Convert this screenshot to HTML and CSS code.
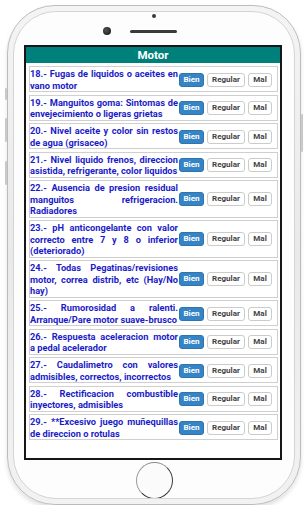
FILE: index.html
```html
<!DOCTYPE html>
<html lang="es">
<head>
  <meta charset="UTF-8">
  <meta name="viewport" content="width=device-width, initial-scale=1">
  <title>Motor</title>
  <link rel="stylesheet" href="styles.css">
</head>
<body>
<div class="phone">
  <span class="side side-l1"></span>
  <span class="side side-l2"></span>
  <span class="side side-l3"></span>
  <span class="side side-r"></span>

  <div class="face">
    <div class="top">
      <span class="sensor"></span>
      <div class="cam-row">
        <span class="camera"></span>
        <span class="speaker"></span>
      </div>
    </div>

    <div class="screen">
      <div class="title">Motor</div>
      <div class="list">
        <div class="row">
          <p class="q">18.- Fugas de liquidos o aceites en vano motor</p>
          <div class="btns"><button class="btn on">Bien</button><button class="btn">Regular</button><button class="btn">Mal</button></div>
        </div>
        <div class="row">
          <p class="q">19.- Manguitos goma: Sintomas de envejecimiento o ligeras grietas</p>
          <div class="btns"><button class="btn on">Bien</button><button class="btn">Regular</button><button class="btn">Mal</button></div>
        </div>
        <div class="row">
          <p class="q">20.- Nivel aceite y color sin restos de agua (grisaceo)</p>
          <div class="btns"><button class="btn on">Bien</button><button class="btn">Regular</button><button class="btn">Mal</button></div>
        </div>
        <div class="row">
          <p class="q">21.- Nivel liquido frenos, direccion asistida, refrigerante, color liquidos</p>
          <div class="btns"><button class="btn on">Bien</button><button class="btn">Regular</button><button class="btn">Mal</button></div>
        </div>
        <div class="row">
          <p class="q">22.- Ausencia de presion residual manguitos refrigeracion. Radiadores</p>
          <div class="btns"><button class="btn on">Bien</button><button class="btn">Regular</button><button class="btn">Mal</button></div>
        </div>
        <div class="row">
          <p class="q">23.- pH anticongelante con valor correcto entre 7 y 8 o inferior (deteriorado)</p>
          <div class="btns"><button class="btn on">Bien</button><button class="btn">Regular</button><button class="btn">Mal</button></div>
        </div>
        <div class="row">
          <p class="q">24.- Todas Pegatinas/revisiones motor, correa distrib, etc (Hay/No hay)</p>
          <div class="btns"><button class="btn on">Bien</button><button class="btn">Regular</button><button class="btn">Mal</button></div>
        </div>
        <div class="row">
          <p class="q">25.- Rumorosidad a ralenti. Arranque/Pare motor suave-brusco</p>
          <div class="btns"><button class="btn on">Bien</button><button class="btn">Regular</button><button class="btn">Mal</button></div>
        </div>
        <div class="row">
          <p class="q">26.- Respuesta aceleracion motor a&nbsp;pedal acelerador</p>
          <div class="btns"><button class="btn on">Bien</button><button class="btn">Regular</button><button class="btn">Mal</button></div>
        </div>
        <div class="row">
          <p class="q">27.- Caudalimetro con valores admisibles, correctos, incorrectos</p>
          <div class="btns"><button class="btn on">Bien</button><button class="btn">Regular</button><button class="btn">Mal</button></div>
        </div>
        <div class="row">
          <p class="q">28.- Rectificacion combustible inyectores, admisibles</p>
          <div class="btns"><button class="btn on">Bien</button><button class="btn">Regular</button><button class="btn">Mal</button></div>
        </div>
        <div class="row">
          <p class="q">29.- **Excesivo juego muñequillas de direccion o rotulas</p>
          <div class="btns"><button class="btn on">Bien</button><button class="btn">Regular</button><button class="btn">Mal</button></div>
        </div>
      </div>
    </div>

    <div class="bottom"><span class="home"></span></div>
  </div>
</div>
</body>
</html>
```

FILE: styles.css
```css
body {
  margin: 0;
  background: #fff;
  font-family: Roboto, "Liberation Sans", sans-serif;
}

/* phone frame */
.phone {
  position: relative;
  box-sizing: border-box;
  width: 294px;
  height: 500px;
  margin: 5px 0 0 7px;
  padding: 5px;
  border: 1px solid #bcbcbc;
  border-radius: 48px;
  background: linear-gradient(180deg, #f4f4f4, #e9e9e9 50%, #f2f2f2);
  box-shadow: 0 3px 4px rgba(0, 0, 0, .12);
}
.side {
  position: absolute;
  width: 2px;
  background: #c9c9c9;
  border-radius: 1px;
}
.side-l1 { left: -3px; top: 82px; height: 12px; }
.side-l2 { left: -3px; top: 112px; height: 24px; }
.side-l3 { left: -3px; top: 155px; height: 24px; }
.side-r { right: -3px; top: 108px; height: 38px; }

.face {
  box-sizing: border-box;
  height: 488px;
  border: 1px solid #d4d4d4;
  border-radius: 43px;
  background: #fdfdfd;
  display: flex;
  flex-direction: column;
  align-items: center;
  overflow: hidden;
}
.top {
  height: 33px;
  width: 100%;
  display: flex;
  flex-direction: column;
  align-items: center;
}
.sensor {
  width: 4px;
  height: 4px;
  margin-top: 2px;
  border-radius: 50%;
  background: #3a3a3a;
}
.cam-row {
  display: flex;
  align-items: center;
  margin-top: 9px;
  padding-right: 28px;
}
.camera {
  width: 8px;
  height: 8px;
  border-radius: 50%;
  background: radial-gradient(circle at 40% 40%, #555, #222 70%);
  margin-right: 19px;
}
.speaker {
  width: 47px;
  height: 3px;
  border-radius: 2px;
  background: #3b3b3b;
}

/* screen */
.screen {
  box-sizing: border-box;
  width: 258px;
  height: 415px;
  margin-left: -2px;
  border: 2px solid #161616;
  background: #fff;
  overflow: hidden;
}
.title {
  height: 16px;
  background: #00807a;
  color: #fff;
  font-weight: 700;
  font-size: 11.5px;
  line-height: 16px;
  text-align: center;
}
.list {
  box-sizing: border-box;
  height: 391px;
  overflow: hidden;
  padding: 3px 2px 0 3px;
}
.row {
  display: flex;
  align-items: center;
  border: 1px solid #cfcfcf;
  padding: 1px 0 0;
  margin-bottom: 2.5px;
}
.q {
  margin: 0;
  width: 148px;
  flex: none;
  text-align: justify;
  font-weight: 700;
  font-size: 9.25px;
  line-height: 11.5px;
  color: #1b1bc8;
}
.btns {
  display: flex;
  margin-left: 1px;
}
.btn {
  font-family: Roboto, "Liberation Sans", sans-serif;
  font-weight: 700;
  font-size: 8px;
  line-height: 10px;
  padding: 1px 4.5px;
  margin: 0 2.5px 0 0;
  border: 1px solid #cbcbcb;
  border-radius: 3px;
  background: #fff;
  color: #444;
}
.btn.on {
  background: #3585c6;
  border-color: #2f74ad;
  color: #fff;
  padding: 1px 3.5px;
}

/* home button */
.bottom {
  height: 38px;
  display: flex;
  justify-content: center;
}
.home {
  box-sizing: border-box;
  width: 37px;
  height: 37px;
  margin-top: 2px;
  border-radius: 50%;
  border: 1.5px solid #666;
  border-color: #8a8a8a #3a3a3a #2e2e2e #9a9a9a;
  background: #fbfbfb;
}
```
